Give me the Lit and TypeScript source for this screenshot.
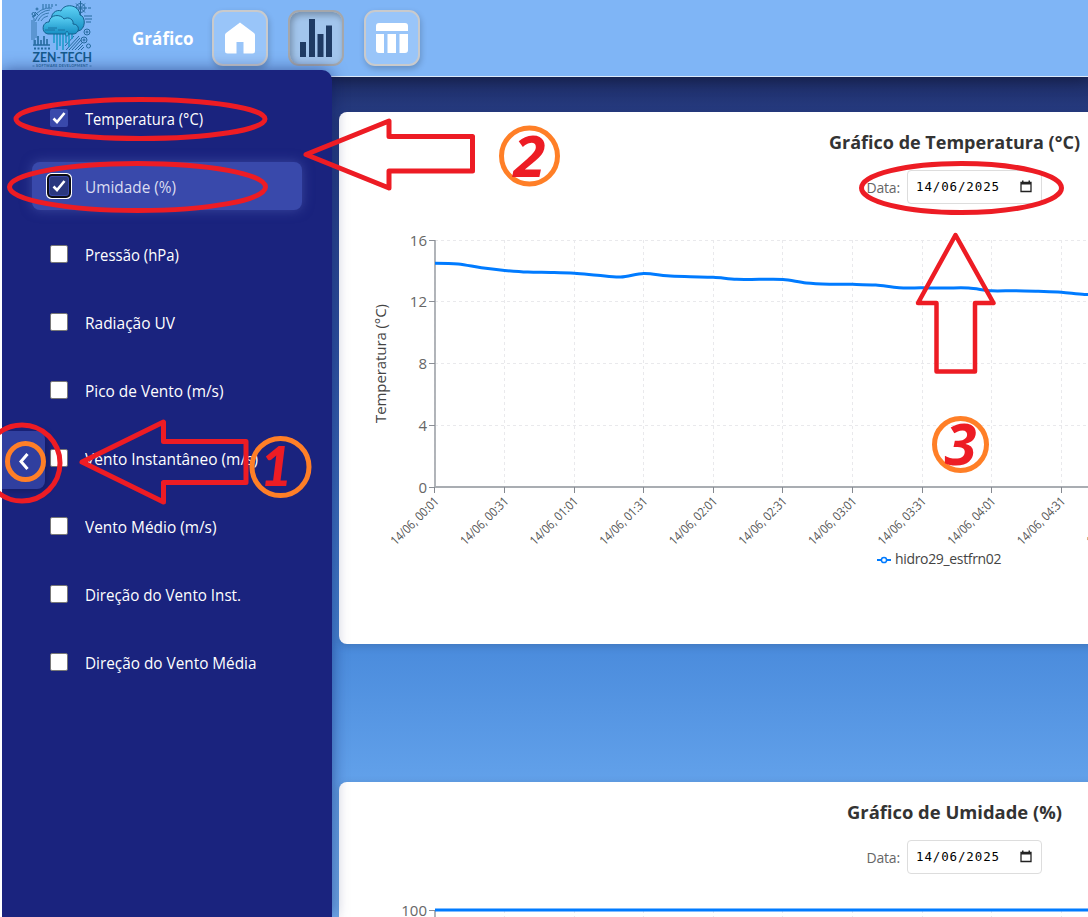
import { LitElement, html, svg, css } from "lit";
import { customElement, property } from "lit/decorators.js";

@customElement("zen-logo")
class ZenLogo extends LitElement {
  static styles = css`:host { display: block; width: 64px; height: 68px; } svg { display: block; }`;
  render() {
    return html`<svg width="64" height="68" viewBox="30 0 64 68" fill="none">
      <defs><linearGradient id="c" x1="0" y1="0" x2="0" y2="1"><stop offset="0" stop-color="#5fd3f6"/><stop offset="1" stop-color="#168fc4"/></linearGradient></defs>
      <g stroke="#256a9e" stroke-width="1">
        <path d="M32 20v20M34 18v26M36 22v16M33 18a20 20 0 0 1 19-10M35 21a17 17 0 0 1 15-11M38 21a13 13 0 0 1 11-8M41 21a9 9 0 0 1 7-5" opacity=".8"/>
        <path d="M43 4v5M46 4v4M49 4v4M52 4v3M56 4v2M35 12l3 3M32 17l4-2"/><circle cx="33.500" cy="14" r="1.500"/><circle cx="37" cy="9" r="1"/>
        <circle cx="80.500" cy="8" r="4.500"/><path d="M80.500 1v14M74 8h13M76 3.500l9 9M85 3.500l-9 9"/><path d="M88 8h3M84 16h8M85 19h7M86 22h5" stroke-width="1.200"/>
        <circle cx="87" cy="32" r="3"/><circle cx="87" cy="32" r="1"/><circle cx="84" cy="40" r="3"/><circle cx="84" cy="40" r="1"/><circle cx="88.500" cy="46" r="2"/>
        <path d="M66 50l13-14M69 50l11-12M72 50l9-10M75 50l8-8M78 50l5-5M65 46l9-10M81 50l3-3"/>
        <path d="M35 40v5M38 36v9M41 40v5M44 36v9M47 39v6M33 45h17" stroke-width="1.600"/>
        <path d="M34 48.500h17" stroke-dasharray="2 1.500" stroke-width="1.800"/>
      </g>
      <g stroke="#1899c9" stroke-width="1.500"><path d="M54 33v10M57 33v17M60 33v13M63 33v17M66 33v10M69 33v14M72 34v5"/></g>
      <path d="M52 23c-3-10 5-14 9-12 3-8 18-7 19 4 6 1 6 15-2 16H58z" fill="url(#c)" stroke="#14608f"/>
      <path d="M50 34c-9 1-9-12-1-12 1-8 12-8 15-3 5-3 10 1 9 5 7 0 7 9 1 10z" fill="url(#c)" stroke="#14608f"/>
      <path d="M45 30h10M48 28h9M58 30h7" stroke="#1a72a4"/><path d="M67 31c-3 4-1 5 0 5s3-1 0-5z" fill="#32b6e5" stroke="#14608f" stroke-width=".7"/>
      <text x="32.500" y="62.200" textLength="59.500" lengthAdjust="spacingAndGlyphs" font-family="Lato, sans-serif" font-weight="700" font-size="13" fill="#15598c">ZEN-TECH</text>
      <text x="36" y="67.200" textLength="52" font-family="Lato, sans-serif" font-weight="700" font-size="3.600" fill="#2a6ba0">SOFTWARE DEVELOPMENT</text>
      <path d="M32.500 66h2M89.500 66h2" stroke="#2a6ba0" stroke-width=".7"/>
    </svg>`;
  }
}

@customElement("chart-card")
class ChartCard extends LitElement {
  @property() heading = "";
  @property() axis = "";
  @property({ type: Number }) headingWidth = 250;
  @property({ attribute: false }) ticks: number[] = [];
  @property({ attribute: false }) values: number[] = [];
  static styles = css`
    :host { display: flex; flex-direction: column; align-items: center; width: 1230px; height: 532px; background: #fff; border-radius: 8px; box-shadow: 0 2px 8px rgba(0,0,0,.15); font-family: "Open Sans", "Noto Sans", sans-serif; flex: none; }
    .title { display: block; height: 30px; margin-top: 16px; }
    .date { display: flex; align-items: center; gap: 7px; margin-top: 12px; height: 34px; }
    .lbl { font-size: 14px; line-height: 20px; color: #666; width: 34px; white-space: nowrap; padding-top: 2px; letter-spacing: -.2px; text-indent: .5px; }
    .box { box-sizing: border-box; display: flex; align-items: center; justify-content: space-between; width: 135px; height: 34px; border: 1px solid #ddd; border-radius: 4px; padding: 0 9px 1px 8px; font: 12.5px "DejaVu Sans Mono", monospace; color: #000; }
    .val { letter-spacing: .87px; }
    .plot { display: block; align-self: flex-start; }
    .tick { font-size: 15px; fill: #666; }
    .time { font-size: 12.5px; fill: #555; }
    .axis { font-size: 15px; fill: #444; }
    .legend { font-size: 14px; fill: #444; }
    .heading { font-size: 18px; font-weight: 700; fill: #333; }
  `;
  render() {
    const step = 69.6, x0 = 96, y0 = 36, h = 247;
    const max = this.ticks[this.ticks.length - 1];
    const xs = Array.from({ length: 11 }, (_, i) => x0 + i * step);
    const ys = this.ticks.map(t => y0 + h - (t / max) * h);
    const pts = this.values.map((v, i) => [x0 + i * step / 3, y0 + h - (v / max) * h]);
    const slope = (i: number) => i === 0 || i === pts.length - 1 ? 0 : (pts[i + 1][1] - pts[i - 1][1]) / 6;
    let d = `M${pts[0][0]} ${pts[0][1]}`;
    for (let i = 1; i < pts.length; i++) {
      const [ax, ay] = pts[i - 1], [bx, by] = pts[i], t = (bx - ax) / 3;
      d += `C${ax + t} ${ay + slope(i - 1)} ${bx - t} ${by - slope(i)} ${bx} ${by}`;
    }
    const time = (i: number) => `14/06, ${String(Math.floor(i / 2)).padStart(2, "0")}:${i % 2 ? "31" : "01"}`;
    return html`
      <svg class="title" width="${this.headingWidth}" height="30"><text class="heading" x="0" y="20.500" textLength="${this.headingWidth}" lengthAdjust="spacingAndGlyphs">${this.heading}</text></svg>
      <div class="date"><span class="lbl">Data:</span>
        <div class="box"><span class="val">14/06/2025</span>
          <svg width="12" height="13" viewBox="0 0 12 13"><path d="M1 2.500h10v9H1z" fill="none" stroke="#222" stroke-width="1.300"/><path d="M1 2h10v2.500H1zM2 .5h1.500V2H2zM8.500.5H10V2H8.500z" fill="#222"/></svg>
        </div></div>
      <svg class="plot" width="1230" height="420" viewBox="0 0 1230 420" fill="none">
        <g stroke="#e9e9ec" stroke-dasharray="3 3">
          ${ys.map(y => svg`<path d="M${x0} ${Math.floor(y) + .5}H1210"/>`)}
          ${xs.map(x => svg`<path d="M${Math.floor(x - .1) + .5} ${y0}V${y0 + h}"/>`)}
        </g>
        <path d="M96 36V283H1210" stroke="#a9adb2" stroke-width="1.800"/>
        ${ys.map((y, i) => svg`<path d="M90 ${Math.floor(y) + .5}h6" stroke="#8b8f96"/><text class="tick" x="88" y="${y + 5.6}" text-anchor="end">${this.ticks[i]}</text>`)}
        ${xs.map((x, i) => svg`<path d="M${Math.floor(x - .1) + .5} 283v6" stroke="#858990"/><text class="time" transform="translate(${x + 4.7} 298) rotate(-45)" text-anchor="end" textLength="62" lengthAdjust="spacingAndGlyphs">${time(i)}</text>`)}
        <text class="axis" transform="translate(47 159.500) rotate(-90)" text-anchor="middle" textLength="119">${this.axis}</text>
        <path d="${d}" stroke="#007bff" stroke-width="3"/>
        <path d="M538 356h14" stroke="#007bff" stroke-width="2"/><circle cx="545" cy="356" r="2.600" fill="#fff" stroke="#007bff" stroke-width="1.500"/>
        <text class="legend" x="556" y="360.300" textLength="106.500">hidro29_estfrn02</text>
      </svg>`;
  }
}

const ITEMS: [string, number][] = [["Temperatura (°C)", 118], ["Umidade (%)", 91], ["Pressão (hPa)", 94], ["Radiação UV", 90], ["Pico de Vento (m/s)", 138.5], ["Vento Instantâneo (m/s)", 173], ["Vento Médio (m/s)", 131.5], ["Direção do Vento Inst.", 156], ["Direção do Vento Média", 171.5]];

@customElement("app-root")
class AppRoot extends LitElement {
  static styles = css`
    :host { display: block; position: relative; width: 1088px; height: 917px; overflow: hidden; box-sizing: border-box; padding-left: 2px; background: #fff; font-family: "Open Sans", "Noto Sans", sans-serif; }
    .page { height: 917px; overflow: hidden; background: linear-gradient(#1d2c66 76px, #263b80 112px, #3157a8 350px, #4a8bdc 644px, #62a1ea 782px, #76b2f4 917px); }
    header { box-sizing: border-box; height: 77px; border-bottom: 1px solid #dce9fa; background: #7fb5f6; display: flex; align-items: flex-start; padding: 0 0 0 28px; position: relative; box-shadow: 0 3px 14px rgba(0,0,0,.35); }
    .brand { margin: 24px 18px 0 38px; width: 62px; height: 32px; display: block; }
    .nav { display: flex; gap: 20px; padding-top: 10px; }
    .btn { box-sizing: border-box; width: 56px; height: 56px; border: 2px solid #c9cacc; border-radius: 11px; background: #99c5f9; display: grid; place-items: center; box-shadow: 1px 3px 6px rgba(0,0,0,.2); }
    .btn.on { border-color: #a5a7ab; background: #a2c5ec; box-shadow: inset 2px 3px 6px rgba(0,0,0,.28); }
    main { display: flex; flex-direction: column; gap: 138px; padding: 35px 0 0 337px; }
    aside { position: absolute; left: 2px; top: 70px; width: 330px; height: 847px; box-sizing: border-box; background: #1a237e; border-radius: 0 10px 0 0; box-shadow: 0 0 16px rgba(10,20,90,.55); clip-path: inset(-24px -24px 0 0); padding: 24px 30px; display: flex; flex-direction: column; gap: 20px; }
    .item { height: 48px; box-sizing: border-box; border-radius: 8px; display: flex; align-items: center; padding: 1px 0 0 18px; gap: 17px; flex: none; }
    .item.hot { background: #3949ab; box-shadow: 0 0 12px rgba(92,107,192,.5); }
    .check { box-sizing: border-box; width: 18px; height: 18px; border: 1px solid #777; background: #fff; border-radius: 2px; display: grid; place-items: center; margin-top: -2px; }
    .check.sel { background: #3949ab; border: 0; }
    .check.focus { background: #2a377e; box-shadow: 0 0 0 1px #3949ab, 0 0 0 3px #0c0d14, 0 0 0 4px #fff; }
    .item text { font-size: 15.500px; fill: #fff; }
    .item.hot text { fill: #d9dcf1; }
    .handle { position: absolute; left: 0; top: 361px; width: 43px; height: 58px; border-radius: 0 8px 8px 0; background: #303f9f; box-shadow: 2px 2px 8px rgba(0,0,0,.25); }
    .marks { position: absolute; left: 0; top: 0; }
    .num { font: italic 700 57px "Open Sans", sans-serif; fill: #ed1c24; stroke: none; }
    .num.foot { font-family: Lato, sans-serif; font-weight: 900; font-size: 56px; }
  `;
  render() {
    const temp = [14.5, 14.45, 14.2, 14.03, 13.92, 13.9, 13.85, 13.72, 13.6, 13.83, 13.68, 13.62, 13.58, 13.45, 13.45, 13.44, 13.22, 13.14, 13.13, 13.08, 12.91, 12.9, 12.89, 12.89, 12.71, 12.72, 12.68, 12.62, 12.47, 12.5];
    return html`
      <div class="page">
        <header>
          <zen-logo></zen-logo>
          <svg class="brand" viewBox="0 0 62 32"><text x="0" y="21" font-size="17.500" font-weight="700" fill="#fff" textLength="61.500" lengthAdjust="spacingAndGlyphs">Gráfico</text></svg>
          <nav class="nav">
            <div class="btn"><svg width="30" height="32" viewBox="0 0 30 32"><path d="M15 .5 29 11q1 1 1 2v16q0 2.500-2.500 2.500H18.500v-11.500h-7v11.500H2.500Q0 31.500 0 29V13q0-1 1-2z" fill="#fff"/></svg></div>
            <div class="btn on"><svg width="34" height="40" viewBox="0 0 34 40"><path d="M1 24h6v15H1zM10 1h6v38h-6zM18.500 16h6v23h-6zM27 7.500h6V39h-6z" fill="#1f3b64"/></svg></div>
            <div class="btn"><svg width="32" height="30" viewBox="0 0 32 30"><path d="M0 8V3q0-3 3-3h26q3 0 3 3v5zM0 11h8v19H3q-3 0-3-3zM11.500 11h8.500v19h-8.500zM23.500 11H32v16q0 3-3 3h-5.500z" fill="#fff"/></svg></div>
          </nav>
        </header>
        <main>
          <chart-card heading="Gráfico de Temperatura (°C)" .headingWidth=${251} axis="Temperatura (°C)" .ticks=${[0, 4, 8, 12, 16]} .values=${temp}></chart-card>
          <chart-card heading="Gráfico de Umidade (%)" .headingWidth=${215} axis="Umidade (%)" .ticks=${[0, 25, 50, 75, 100]} .values=${temp.map(() => 100)}></chart-card>
        </main>
      </div>
      <aside>
        ${ITEMS.map(([name, w], i) => html`<div class="item ${i === 1 ? "hot" : ""}">
          <span class="check ${i < 2 ? "sel" : ""} ${i === 1 ? "focus" : ""}">${i < 2 ? html`<svg width="14" height="14" viewBox="0 0 14 14"><path d="M1.500 7.500 5 11l7.500-9" fill="none" stroke="#fff" stroke-width="2.600"/></svg>` : ""}</span>
          <svg width="200" height="24"><text x="0" y="17.500" textLength="${w}" lengthAdjust="spacingAndGlyphs">${name}</text></svg>
        </div>`)}
        <div class="handle"></div>
      </aside>
      <svg class="marks" width="1088" height="917" fill="none" stroke="#ed1c24" stroke-width="5">
        <path d="M27.500 454 21 461.500 27.500 469" stroke="#fff" stroke-width="3"/>
        <ellipse cx="140.500" cy="119" rx="124.500" ry="19.500"/>
        <ellipse cx="137.500" cy="187" rx="128" ry="23.500"/>
        <ellipse cx="961.500" cy="188" rx="100" ry="24.500"/>
        <circle cx="22" cy="463" r="38"/>
        <path d="M306 154.500 389 121v15.500h83.500v34.500H389v17z" stroke-linejoin="round"/>
        <path d="M82 462 163.500 422v19.500H246v41h-82.500v19.500z" stroke-linejoin="round"/>
        <path d="M955.500 235 993.500 303H975v68.500h-38.500V303H918z" stroke-linejoin="round" stroke-width="4.500"/>
        <g stroke="#ff7f27"><circle cx="25.500" cy="461.500" r="18"/><circle cx="280.500" cy="467" r="28.500"/><circle cx="529.500" cy="156" r="28"/><circle cx="960.500" cy="444.500" r="26"/></g>
        <text class="num foot" x="260" y="486">1</text>
        <text class="num" x="513.500" y="177" textLength="32" lengthAdjust="spacingAndGlyphs">2</text>
        <text class="num" x="944.500" y="464.500" textLength="32" lengthAdjust="spacingAndGlyphs">3</text>
      </svg>`;
  }
}
